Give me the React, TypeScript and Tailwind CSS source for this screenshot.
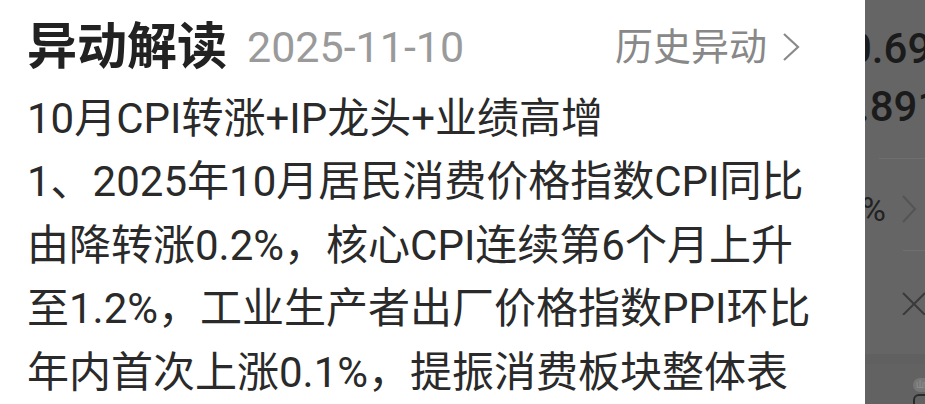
import React from "react";

const lines = [
  "10月CPI转涨+IP龙头+业绩高增",
  "1、2025年10月居民消费价格指数CPI同比",
  "由降转涨0.2%，核心CPI连续第6个月上升",
  "至1.2%，工业生产者出厂价格指数PPI环比",
  "年内首次上涨0.1%，提振消费板块整体表",
];

const font = { fontFamily: "Roboto, 'Noto Sans CJK SC', sans-serif" };

export default function App() {
  return (
    <div className="flex h-[404px] w-[925px] overflow-hidden bg-white" style={font}>
      {/* main sheet */}
      <div className="flex h-full w-[865px] shrink-0 flex-col bg-white pl-[27px]">
        <div className="flex h-[88px] items-center pt-[8px] pr-[64px]">
          <span className="text-[50px] font-semibold leading-none text-[#222]">异动解读</span>
          <span className="ml-[20px] text-[43px] leading-none text-[#9a9a9a]">2025-11-10</span>
          <div className="ml-auto flex items-center text-[#888]">
            <span className="text-[38px] leading-none">历史异动</span>
            <svg className="ml-[14px] h-[30px] w-[20px]" viewBox="0 0 20 30" fill="none">
              <path d="M3 2 L17 15 L3 28" stroke="#8a8a8a" strokeWidth="2.2" />
            </svg>
          </div>
        </div>
        <div className="text-[42px] leading-[63.5px] text-[#2a2a2a]">
          {lines.map(l => (
            <div key={l} className="whitespace-nowrap">{l}</div>
          ))}
        </div>
      </div>

      {/* dimmed side panel */}
      <div className="flex h-full flex-1 flex-col overflow-hidden bg-[#656565]">
        <div className="whitespace-nowrap pt-[20px] text-[42px] font-medium leading-[58px] text-[#1b1b1b]">
          <div className="-ml-[17px]">0.69</div>
          <div className="-ml-[7px]">.891</div>
        </div>
        <div className="ml-[14px] mt-[22px] h-px bg-[#6f6f6f]" />
        <div className="flex h-[92px] items-center pt-[8px]">
          <span className="-ml-[4px] text-[34px] leading-none text-[#222]">%</span>
          <svg className="ml-[14px] h-[30px] w-[18px]" viewBox="0 0 18 30" fill="none">
            <path d="M3 2 L15 15 L3 28" stroke="#545454" strokeWidth="2" />
          </svg>
        </div>
        <div className="ml-[38px] h-px bg-[#6f6f6f]" />
        <div className="flex h-[104px] items-center pl-[36px]">
          <svg className="h-[24px] w-[24px]" viewBox="0 0 24 24" fill="none">
            <path d="M2 2 L24 24 M24 2 L2 24" stroke="#3a3a3a" strokeWidth="2" />
          </svg>
        </div>
        <div className="h-[10px] bg-[#606060]" />
        <div className="flex-1 bg-[#626262] pl-[48px] pt-[14px]">
          <div className="flex h-[14px] w-[30px] items-center justify-center rounded-full bg-[#767676] text-[8px] leading-none text-[#9a9a9a]">
            山红名
          </div>
          <div className="mt-[2px] h-[10px] w-[30px] rounded-t-[6px] border-x-2 border-t-2 border-[#2a2a2a]" />
        </div>
      </div>
    </div>
  );
}
